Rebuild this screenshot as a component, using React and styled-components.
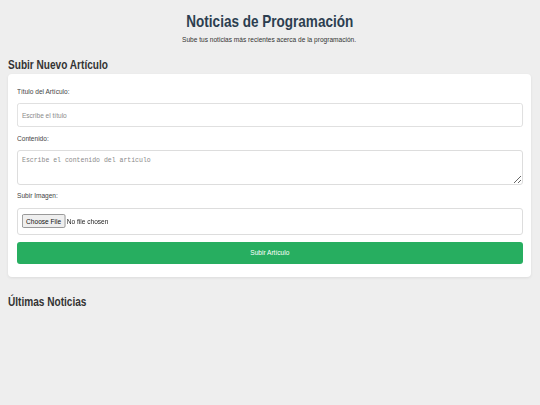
import React from 'react';
import styled, { createGlobalStyle } from 'styled-components';

// the reference uses a narrow face that is not installed, so text is squeezed
const NARROW = 0.82;

const GlobalStyle = createGlobalStyle`
  body {
    margin: 0;
    background: #eeeeee;
    color: #333333;
    font-family: "Liberation Sans", Arial, sans-serif;
    font-size: 8px;
  }
`;

const StyledNarrow = styled.span`
  display: inline-block;
  white-space: nowrap;
  transform: scaleX(${NARROW});
  transform-origin: ${(props) => props.origin || 'left'};
`;

const StyledPage = styled.div`
  padding: 0 9px 40px 8px;
`;

const StyledHeader = styled.header`
  text-align: center;
  padding-top: 12px;
`;

const StyledTitle = styled.h1`
  margin: 0;
  font-size: 16.5px;
  line-height: 19px;
  font-weight: bold;
  color: #2c3e50;
`;

const StyledSubtitle = styled.p`
  margin: 4px 0 0;
  font-size: 8px;
  line-height: 10px;
  color: #333333;
`;

const StyledHeading = styled.h2`
  margin: ${(props) => props.margin};
  font-size: 12.3px;
  line-height: 14px;
  font-weight: bold;
  color: #333333;
`;

const StyledCard = styled.form`
  display: flex;
  flex-direction: column;
  gap: 6.5px;
  padding: 13px 8px 13px 9px;
  background: #ffffff;
  border-radius: 4px;
  box-shadow: 0 1px 3px rgba(0, 0, 0, 0.08);
`;

const StyledLabel = styled.label`
  display: block;
  font-size: 8px;
  line-height: 10px;
  color: #444444;
`;

const StyledInput = styled.input`
  box-sizing: border-box;
  width: calc(100% / ${NARROW});
  height: 24px;
  margin: 0;
  padding: 0 5px;
  border: 1px solid #dddddd;
  border-left-width: 1.22px;
  border-right-width: 1.22px;
  border-radius: 3px;
  font-family: inherit;
  font-size: 8px;
  color: #333333;
  outline: none;
  transform: scaleX(${NARROW});
  transform-origin: left;

  &::placeholder {
    color: #8a8a8a;
  }
`;

const StyledTextArea = styled.textarea`
  box-sizing: border-box;
  display: block;
  width: 100%;
  height: 34.5px;
  margin: 0;
  padding: 6px 4px;
  border: 1px solid #dddddd;
  border-radius: 3px;
  font-family: "Liberation Mono", monospace;
  font-size: 6.5px;
  color: #333333;
  outline: none;

  &::placeholder {
    color: #8a8a8a;
  }
`;

const StyledFileBox = styled.div`
  box-sizing: border-box;
  display: flex;
  align-items: center;
  height: 27.5px;
  padding: 0 4px;
  border: 1px solid #dddddd;
  border-radius: 3px;
`;

const StyledFile = styled.input`
  font-family: inherit;
  font-size: 8px;
  color: #222222;
  transform: scaleX(${NARROW});
  transform-origin: left;

  &::file-selector-button {
    height: 14px;
    margin-right: 2px;
    padding: 0 4px;
    border: 1px solid #8f8f8f;
    border-radius: 2px;
    background: #efefef;
    font-family: inherit;
    font-size: 8px;
    color: #111111;
  }
`;

const StyledButton = styled.button`
  height: 22px;
  border: none;
  border-radius: 3px;
  background: #27ae60;
  color: #ffffff;
  font-family: inherit;
  font-size: 8px;
  cursor: pointer;
`;

const App = () => (
  <StyledPage>
    <GlobalStyle />
    <StyledHeader>
      <StyledTitle>
        <StyledNarrow origin="center">Noticias de Programación</StyledNarrow>
      </StyledTitle>
      <StyledSubtitle>
        <StyledNarrow origin="center">Sube tus noticias más recientes acerca de la programación.</StyledNarrow>
      </StyledSubtitle>
    </StyledHeader>
    <StyledHeading margin="12.5px 0 2px">
      <StyledNarrow>Subir Nuevo Artículo</StyledNarrow>
    </StyledHeading>
    <StyledCard onSubmit={(e) => e.preventDefault()}>
      <StyledLabel htmlFor="titulo">
        <StyledNarrow>Título del Artículo:</StyledNarrow>
      </StyledLabel>
      <StyledInput id="titulo" type="text" placeholder="Escribe el título" />
      <StyledLabel htmlFor="contenido">
        <StyledNarrow>Contenido:</StyledNarrow>
      </StyledLabel>
      <StyledTextArea id="contenido" placeholder="Escribe el contenido del artículo" />
      <StyledLabel htmlFor="imagen">
        <StyledNarrow>Subir Imagen:</StyledNarrow>
      </StyledLabel>
      <StyledFileBox>
        <StyledFile id="imagen" type="file" />
      </StyledFileBox>
      <StyledButton type="submit">
        <StyledNarrow origin="center">Subir Artículo</StyledNarrow>
      </StyledButton>
    </StyledCard>
    <StyledHeading margin="18px 0 0">
      <StyledNarrow>Últimas Noticias</StyledNarrow>
    </StyledHeading>
  </StyledPage>
);

export default App;
